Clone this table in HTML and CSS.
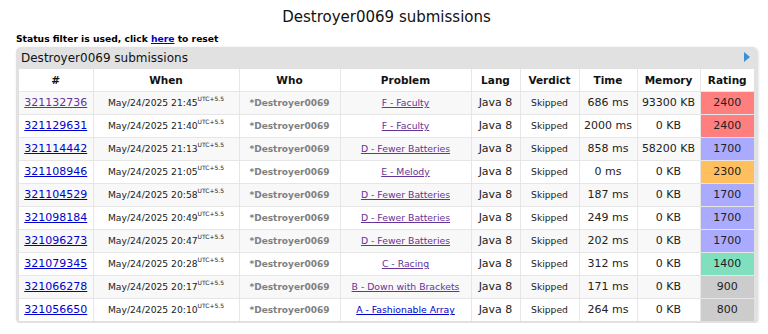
FILE: index.html
```html
<!DOCTYPE html>
<html>
<head>
<meta charset="utf-8">
<link rel="stylesheet" href="styles.css">
</head>
<body>
<h1 class="title">Destroyer0069 submissions</h1>
<div class="filter">Status filter is used, click <a href="#" class="lnk">here</a> to reset</div>
<div class="box">
  <div class="box-head">
    <span>Destroyer0069 submissions</span>
    <span class="tri"></span>
  </div>
  <table class="grid">
    <colgroup>
      <col class="c-id"><col class="c-when"><col class="c-who"><col class="c-prob"><col class="c-lang"><col class="c-verd"><col class="c-time"><col class="c-mem"><col class="c-rat">
    </colgroup>
    <thead>
      <tr><th>#</th><th>When</th><th>Who</th><th>Problem</th><th>Lang</th><th>Verdict</th><th>Time</th><th>Memory</th><th>Rating</th></tr>
    </thead>
    <tbody>
      <tr class="odd"><td class="id"><a href="#" class="visited">321132736</a></td><td class="when">May/24/2025 21:45<sup>UTC+5.5</sup></td><td class="who">*Destroyer0069</td><td class="prob"><a href="#" class="visited">F - Faculty</a></td><td class="num">Java 8</td><td class="verd">Skipped</td><td class="num">686 ms</td><td class="num">93300 KB</td><td class="num r-red">2400</td></tr>
      <tr><td class="id"><a href="#" class="lnk">321129631</a></td><td class="when">May/24/2025 21:40<sup>UTC+5.5</sup></td><td class="who">*Destroyer0069</td><td class="prob"><a href="#" class="visited">F - Faculty</a></td><td class="num">Java 8</td><td class="verd">Skipped</td><td class="num">2000 ms</td><td class="num">0 KB</td><td class="num r-red">2400</td></tr>
      <tr class="odd"><td class="id"><a href="#" class="lnk">321114442</a></td><td class="when">May/24/2025 21:13<sup>UTC+5.5</sup></td><td class="who">*Destroyer0069</td><td class="prob"><a href="#" class="visited">D - Fewer Batteries</a></td><td class="num">Java 8</td><td class="verd">Skipped</td><td class="num">858 ms</td><td class="num">58200 KB</td><td class="num r-violet">1700</td></tr>
      <tr><td class="id"><a href="#" class="lnk">321108946</a></td><td class="when">May/24/2025 21:05<sup>UTC+5.5</sup></td><td class="who">*Destroyer0069</td><td class="prob"><a href="#" class="visited">E - Melody</a></td><td class="num">Java 8</td><td class="verd">Skipped</td><td class="num">0 ms</td><td class="num">0 KB</td><td class="num r-orange">2300</td></tr>
      <tr class="odd"><td class="id"><a href="#" class="lnk">321104529</a></td><td class="when">May/24/2025 20:58<sup>UTC+5.5</sup></td><td class="who">*Destroyer0069</td><td class="prob"><a href="#" class="visited">D - Fewer Batteries</a></td><td class="num">Java 8</td><td class="verd">Skipped</td><td class="num">187 ms</td><td class="num">0 KB</td><td class="num r-violet">1700</td></tr>
      <tr><td class="id"><a href="#" class="lnk">321098184</a></td><td class="when">May/24/2025 20:49<sup>UTC+5.5</sup></td><td class="who">*Destroyer0069</td><td class="prob"><a href="#" class="visited">D - Fewer Batteries</a></td><td class="num">Java 8</td><td class="verd">Skipped</td><td class="num">249 ms</td><td class="num">0 KB</td><td class="num r-violet">1700</td></tr>
      <tr class="odd"><td class="id"><a href="#" class="lnk">321096273</a></td><td class="when">May/24/2025 20:47<sup>UTC+5.5</sup></td><td class="who">*Destroyer0069</td><td class="prob"><a href="#" class="visited">D - Fewer Batteries</a></td><td class="num">Java 8</td><td class="verd">Skipped</td><td class="num">202 ms</td><td class="num">0 KB</td><td class="num r-violet">1700</td></tr>
      <tr><td class="id"><a href="#" class="lnk">321079345</a></td><td class="when">May/24/2025 20:28<sup>UTC+5.5</sup></td><td class="who">*Destroyer0069</td><td class="prob"><a href="#" class="visited">C - Racing</a></td><td class="num">Java 8</td><td class="verd">Skipped</td><td class="num">312 ms</td><td class="num">0 KB</td><td class="num r-green">1400</td></tr>
      <tr class="odd"><td class="id"><a href="#" class="lnk">321066278</a></td><td class="when">May/24/2025 20:17<sup>UTC+5.5</sup></td><td class="who">*Destroyer0069</td><td class="prob"><a href="#" class="visited">B - Down with Brackets</a></td><td class="num">Java 8</td><td class="verd">Skipped</td><td class="num">171 ms</td><td class="num">0 KB</td><td class="num r-gray">900</td></tr>
      <tr><td class="id"><a href="#" class="lnk">321056650</a></td><td class="when">May/24/2025 20:10<sup>UTC+5.5</sup></td><td class="who">*Destroyer0069</td><td class="prob"><a href="#" class="lnk">A - Fashionable Array</a></td><td class="num">Java 8</td><td class="verd">Skipped</td><td class="num">264 ms</td><td class="num">0 KB</td><td class="num r-gray">800</td></tr>
    </tbody>
  </table>
</div>
</body>
</html>
```

FILE: styles.css
```css
* { box-sizing: border-box; }
html, body { margin: 0; padding: 0; background: #fff; }
body {
  font-family: "DejaVu Sans", Verdana, sans-serif;
  color: #222;
  padding: 0 11px 0 16px;
}
.title {
  margin: 0;
  padding-top: 7px;
  height: 31px;
  font-size: 15px;
  font-weight: normal;
  text-align: center;
  line-height: 20px;
  color: #111;
}
.filter {
  font-size: 9.2px;
  font-weight: bold;
  height: 16px;
  line-height: 16px;
  color: #000;
}
.lnk { color: #0000cc; text-decoration: underline; }
.visited { color: #663399; text-decoration: underline; }
.box {
  width: 741px;
  background: #e1e1e1;
  border-radius: 5px;
  padding: 0 3px 2px 3px;
  box-shadow: 1px 1px 3px rgba(0,0,0,0.18);
}
.box-head {
  height: 22px;
  display: flex;
  align-items: center;
  justify-content: space-between;
  font-size: 12px;
  color: #111;
  padding-left: 2px;
}
.tri {
  width: 0; height: 0;
  border-top: 5.5px solid transparent;
  border-bottom: 5.5px solid transparent;
  border-left: 6px solid #3b8fd9;
  margin-right: 4px;
  margin-top: -3px;
}
.grid {
  width: 735px;
  table-layout: fixed;
  border-collapse: collapse;
  background: #fff;
}
.c-id { width: 74px; }
.c-when { width: 146px; }
.c-who { width: 101px; }
.c-prob { width: 131px; }
.c-lang { width: 49px; }
.c-verd { width: 59px; }
.c-time { width: 58px; }
.c-mem { width: 63px; }
.c-rat { width: 54px; }
.grid th, .grid td {
  border: 1px solid #e6e6e6;
  text-align: center;
  padding: 0;
  white-space: nowrap;
  overflow: hidden;
}
.grid tr:first-child th { border-top: none; }
.grid th:first-child, .grid td:first-child { border-left: none; }
.grid th:last-child, .grid td:last-child { border-right: none; }
.grid tbody tr:last-child td { border-bottom: none; }
.grid th {
  height: 22px;
  font-size: 10.5px;
  font-weight: bold;
  color: #111;
}
.grid td { height: 23px; }
.grid tr.odd td { background: #f8f8f8; }
.id { font-size: 11px; }
.when { font-size: 9.2px; color: #222; }
.when sup { font-size: 6px; vertical-align: 5px; line-height: 0; }
.who { font-size: 9px; font-weight: bold; color: #808080; }
.prob { font-size: 9.3px; }
.num { font-size: 11px; color: #222; }
.verd { font-size: 9.2px; color: #222; }
.grid tr td.r-red { background: #ff7f7f; }
.grid tr td.r-violet { background: #aaaaff; }
.grid tr td.r-orange { background: #ffbf5f; }
.grid tr td.r-green { background: #7fdfbf; }
.grid tr td.r-gray { background: #cccccc; }
```
